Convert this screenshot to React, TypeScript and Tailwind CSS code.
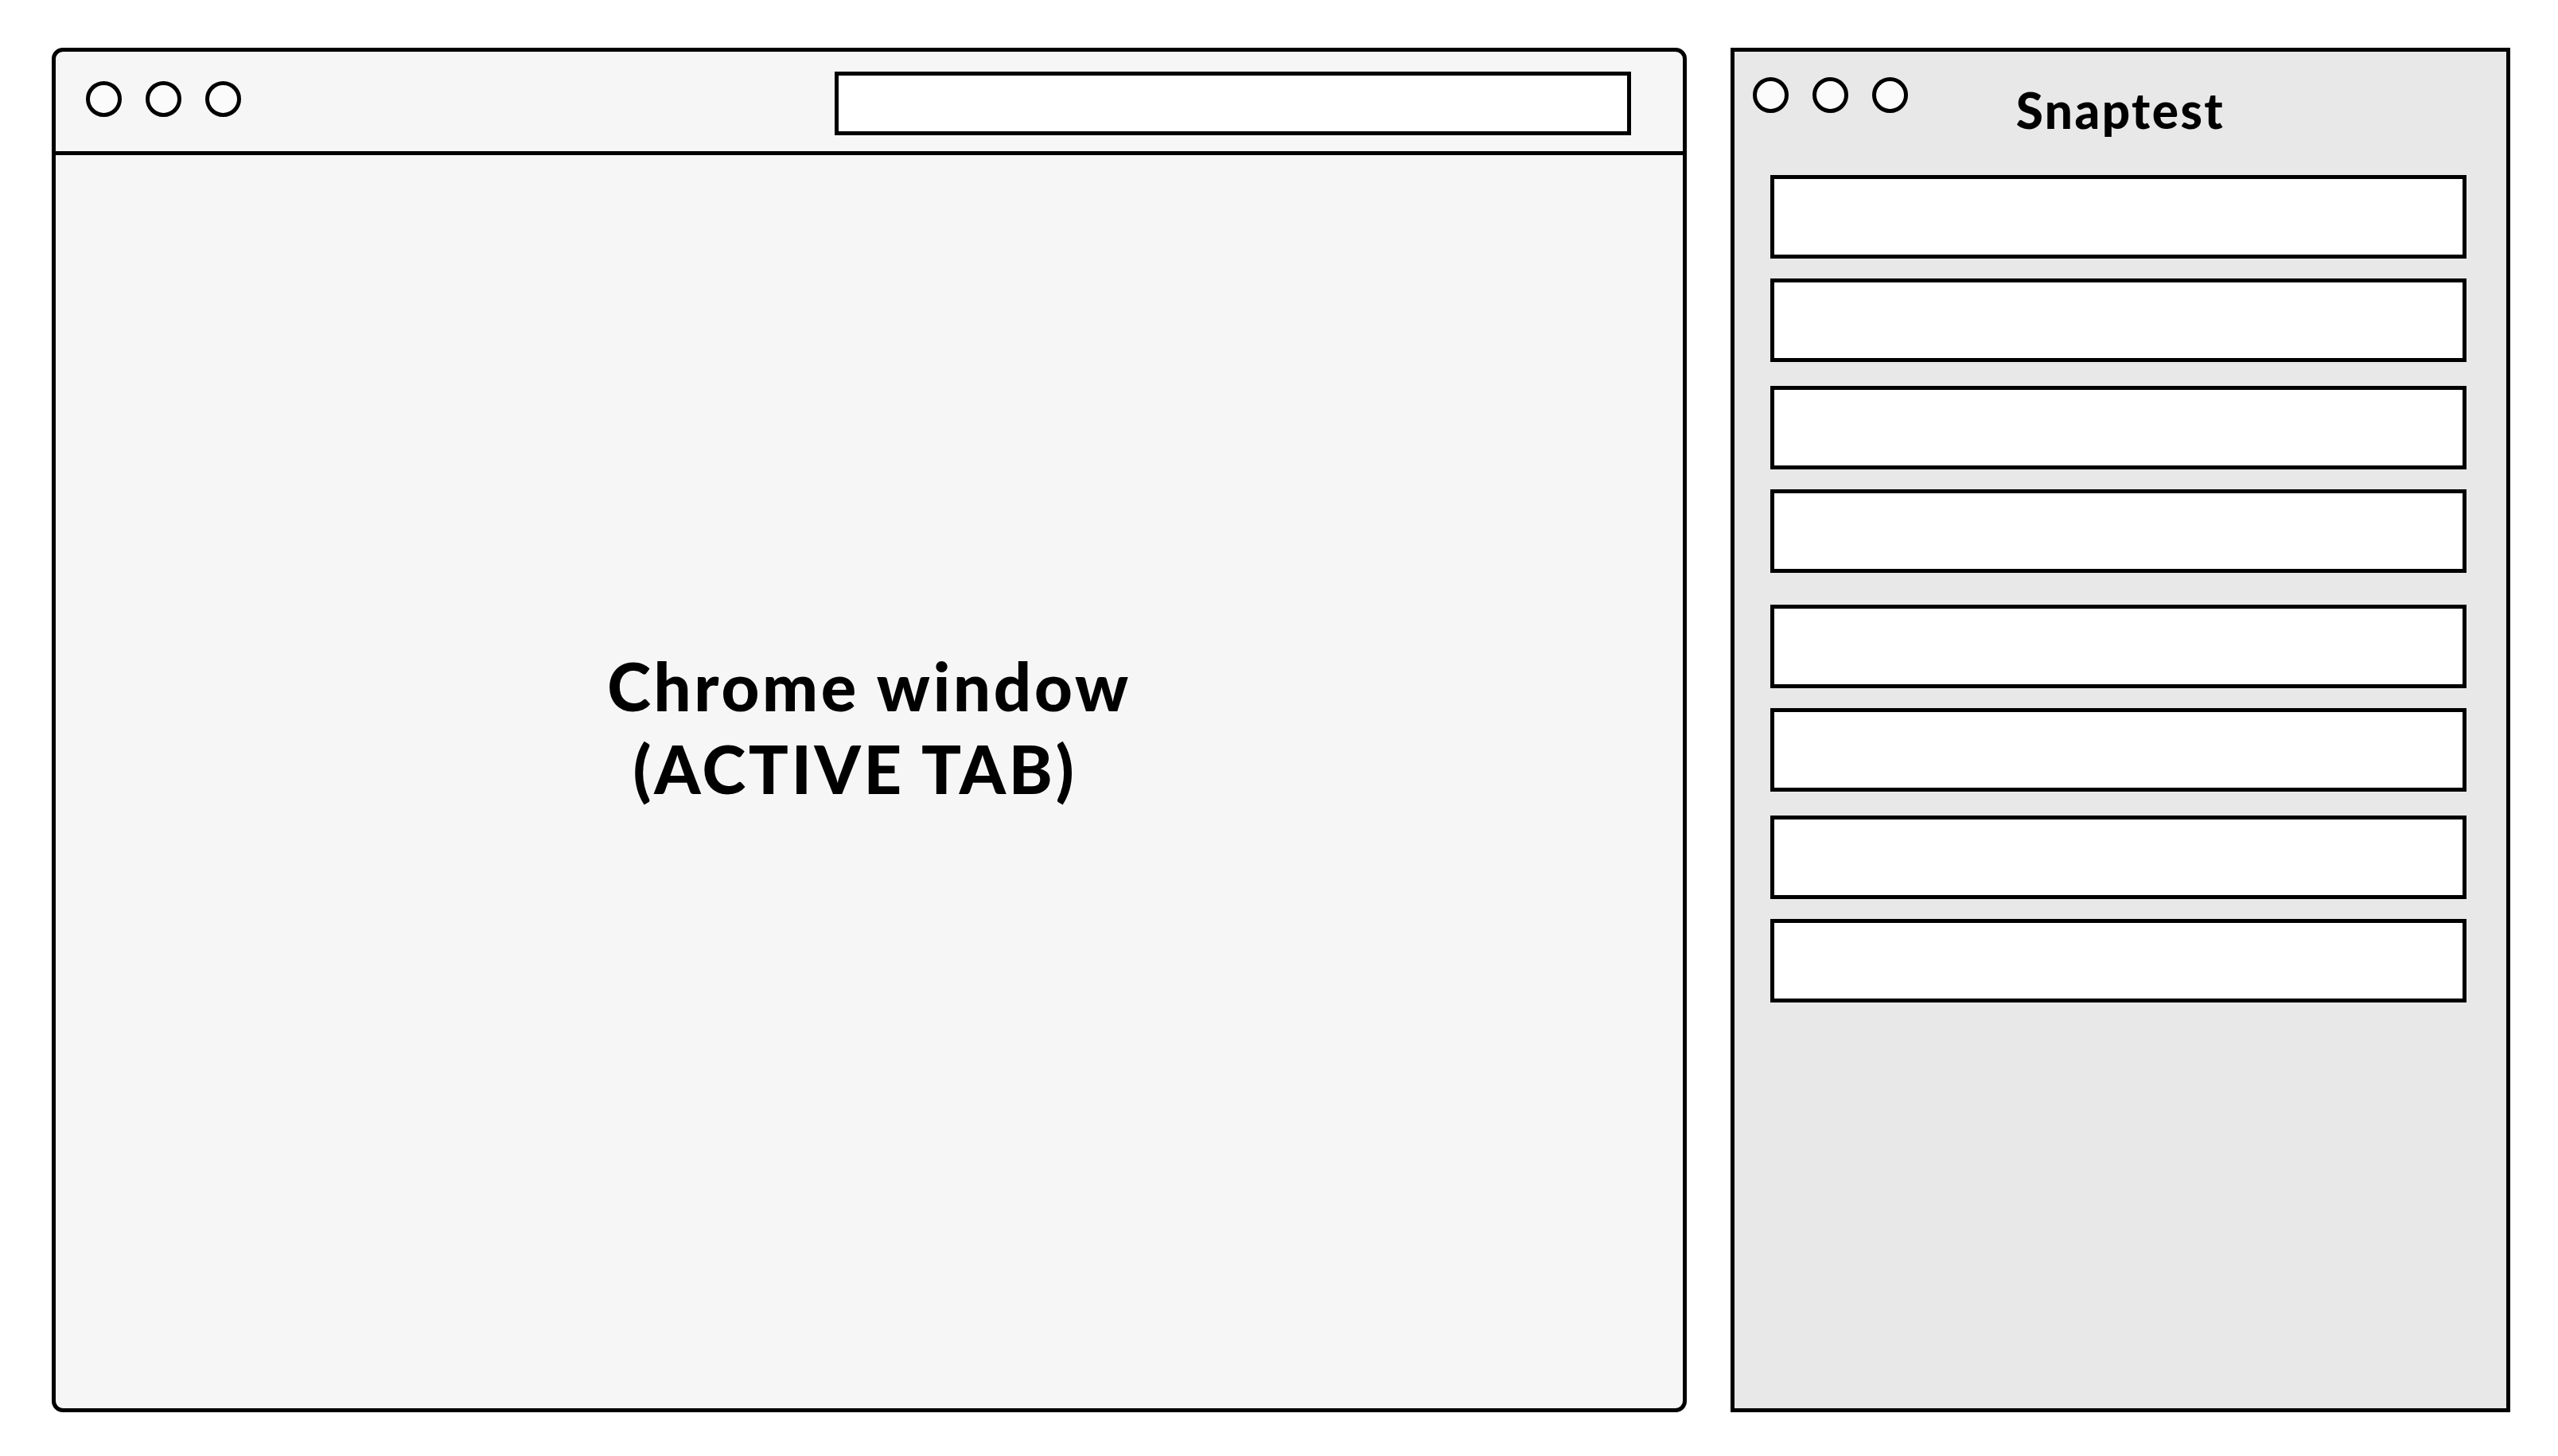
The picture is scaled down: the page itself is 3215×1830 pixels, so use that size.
import React from "react";

const Dot = () => (
  <div className="w-[45px] h-[45px] rounded-full border-[5px] border-black bg-[#fbfbfb] shrink-0" />
);

const Item = ({ mt }: { mt: string }) => (
  <div className={`w-[875px] h-[105px] border-[5px] border-black bg-white ${mt}`} />
);

export default function App() {
  return (
    <div className="w-[3215px] h-[1830px] bg-white flex items-start pt-[60px] pl-[65px] gap-[55px]" style={{ fontFamily: "Lato, 'Noto Sans', sans-serif" }}>
      {/* Chrome window */}
      <div className="w-[2055px] h-[1715px] border-[5px] border-black rounded-[14px] bg-[#f6f6f6] flex flex-col overflow-hidden">
        <div className="h-[130px] border-b-[5px] border-black flex items-start shrink-0">
          <div className="flex gap-[30px] mt-[37px] ml-[38px]">
            <Dot />
            <Dot />
            <Dot />
          </div>
          <div className="ml-auto mr-[65px] mt-[25px] w-[1001px] h-[80px] border-[5px] border-black bg-white" />
        </div>
        <div className="flex-1 flex items-center justify-center pb-[138px]">
          <div className="flex flex-col items-center text-black font-black text-[83px] leading-[104px] tracking-[0.045em]">
            <div>Chrome window</div>
            <div className="pr-[36px]">(ACTIVE TAB)</div>
          </div>
        </div>
      </div>

      {/* Snaptest window */}
      <div className="w-[980px] h-[1715px] border-[5px] border-black bg-[#e8e8e8] flex flex-col">
        <div className="grid grid-cols-[1fr_auto_1fr] items-start h-[155px] shrink-0">
          <div className="flex gap-[30px] mt-[32px] ml-[23px]">
            <Dot />
            <Dot />
            <Dot />
          </div>
          <div className="mt-[36px] text-[62px] leading-[75px] font-black text-black tracking-[0.04em]">Snaptest</div>
          <div />
        </div>
        <div className="flex flex-col pl-[45px]">
          <Item mt="mt-0" />
          <Item mt="mt-[25px]" />
          <Item mt="mt-[30px]" />
          <Item mt="mt-[25px]" />
          <Item mt="mt-[40px]" />
          <Item mt="mt-[25px]" />
          <Item mt="mt-[30px]" />
          <Item mt="mt-[25px]" />
        </div>
      </div>
    </div>
  );
}
